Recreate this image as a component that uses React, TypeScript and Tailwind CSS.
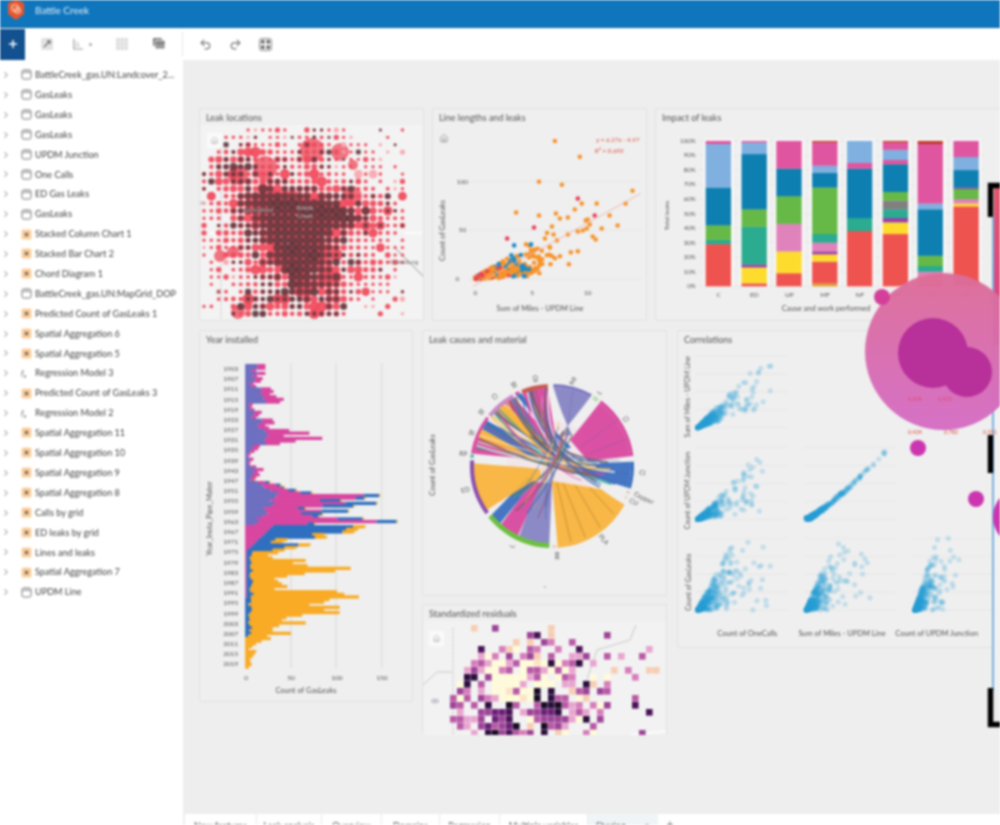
import React from "react";
import { ChevronRight, House, Plus, Redo2, Undo2 } from "lucide-react";

function makeRng(seed: number) {
  let s = seed >>> 0;
  return () => {
    s = (s + 0x6d2b79f5) >>> 0;
    let t = s;
    t = Math.imul(t ^ (t >>> 15), t | 1);
    t ^= t + Math.imul(t ^ (t >>> 7), t | 61);
    return ((t ^ (t >>> 14)) >>> 0) / 4294967296;
  };
}

type RowKind = "t" | "o" | "f";
const rows: [RowKind, string][] = [
  ["t", "BattleCreek_gas.UN:Landcover_2..."], ["t", "GasLeaks"], ["t", "GasLeaks"], ["t", "GasLeaks"],
  ["t", "UPDM Junction"], ["t", "One Calls"], ["t", "ED Gas Leaks"], ["t", "GasLeaks"],
  ["o", "Stacked Column Chart 1"], ["o", "Stacked Bar Chart 2"], ["o", "Chord Diagram 1"],
  ["t", "BattleCreek_gas.UN:MapGrid_DOP"], ["o", "Predicted Count of GasLeaks 1"],
  ["o", "Spatial Aggregation 6"], ["o", "Spatial Aggregation 5"], ["f", "Regression Model 3"],
  ["o", "Predicted Count of GasLeaks 3"], ["f", "Regression Model 2"], ["o", "Spatial Aggregation 11"],
  ["o", "Spatial Aggregation 10"], ["o", "Spatial Aggregation 9"], ["o", "Spatial Aggregation 8"],
  ["o", "Calls by grid"], ["o", "ED leaks by grid"], ["o", "Lines and leaks"], ["o", "Spatial Aggregation 7"],
  ["t", "UPDM Line"],
];

function RowIcon({ kind }: { kind: RowKind }) {
  if (kind === "f")
    return <span className="w-[11px] text-[8px] italic leading-none text-[#666]">f<sub className="text-[6px]">x</sub></span>;
  if (kind === "o")
    return (
      <svg width="11" height="11" viewBox="0 0 11 11" className="shrink-0">
        <rect x="0.5" y="0.5" width="10" height="10" rx="1.5" fill="#fbd0a0" />
        <rect x="3" y="3" width="5" height="5" fill="#f6b26a" />
        <circle cx="5.5" cy="5.5" r="1.5" fill="#3f6fa8" />
      </svg>
    );
  return (
    <svg width="11" height="11" viewBox="0 0 11 11" fill="none" stroke="#777" strokeWidth="1" className="shrink-0">
      <rect x="1" y="1" width="9" height="9" rx="1.5" />
      <path d="M1 3.5h9M4 1v2.5M7 1v2.5" strokeWidth="0.7" />
    </svg>
  );
}

function Panel({ title, className, children }: { title: string; className: string; children: React.ReactNode }) {
  return (
    <section className={`flex flex-col shrink-0 overflow-hidden rounded-[2px] border border-[#e0e0e0] bg-[#efefef] ${className}`}>
      <h2 className="h-[16px] shrink-0 pl-[6px] pt-[3px] text-[9px] font-normal leading-[12px] text-[#555]">{title}</h2>
      {children}
    </section>
  );
}

function Txt({ x, y, s, a = "middle", r, size = 7.5, fill = "#555", italic }: { x: number; y: number; s: string; a?: "start" | "middle" | "end"; r?: number; size?: number; fill?: string; italic?: boolean }) {
  return (
    <text x={x} y={y} textAnchor={a} fontSize={size} fill={fill} fontStyle={italic ? "italic" : undefined} transform={r !== undefined ? `rotate(${r} ${x} ${y})` : undefined}>
      {s}
    </text>
  );
}

function HomeBtn({ x, y }: { x: number; y: number }) {
  return (
    <g>
      <rect x={x} y={y} width="15" height="15" fill="#fafafa" />
      <House x={x + 3.5} y={y + 3.5} width="8" height="8" stroke="#999" strokeWidth="1.5" />
    </g>
  );
}

/* ---------- Leak locations ---------- */
function LeakMap() {
  const rng = makeRng(11);
  const clusters = [
    [288, 225, 30, 28, 0.95], [302, 270, 20, 30, 0.85], [340, 212, 28, 16, 0.7], [232, 168, 24, 12, 0.45],
    [312, 155, 9, 10, 0.4], [250, 305, 16, 10, 0.4], [335, 300, 10, 16, 0.35], [365, 265, 16, 8, 0.3], [255, 200, 20, 12, 0.5],
  ];
  const big: React.ReactNode[] = [];
  const dark: React.ReactNode[] = [];
  let k = 0;
  for (let y = 130; y <= 320; y += 7.35) {
    for (let x = 204; x <= 408; x += 7.35) {
      let d = 0;
      for (const [cx, cy, sx, sy, w] of clusters) d += w * Math.exp(-((x - cx) ** 2) / (2 * sx * sx) - ((y - cy) ** 2) / (2 * sy * sy));
      const dd = Math.min(d, 1);
      const far = Math.hypot((x - 298) / 112, (y - 225) / 105);
      if (rng() > (far > 1.0 ? 0.3 : 0.76) + d) continue;
      const rr = 1.7 + (rng() < 0.14 ? 0.9 : 0) + (rng() < 0.05 ? 2.5 : 0) + dd * 4.5 * (0.4 + rng() * 0.8);
      big.push(<circle key={k++} cx={x} cy={y} r={rr} fill={d < 0.05 && rng() < 0.2 ? "#f8a8b0" : "#f04c5e"} opacity={0.95} />);
      if (rng() < 0.09 + d * 1.05) {
        const rd = 1.5 + dd * 2.6 + (rng() < 0.12 ? 1.2 : 0);
        dark.push(<circle key={k++} cx={x} cy={y} r={rd} fill="#4a363a" opacity={0.75} />);
      }
    }
  }
  const blobs: [number, number, number][] = [[312, 150, 12], [340, 152, 9], [265, 168, 12], [238, 175, 10], [353, 165, 5], [233, 252, 6], [220, 256, 6], [238, 312, 7], [352, 196, 10]];
  return (
    <svg viewBox="200 125 224 195" className="block h-[195px] w-[224px]">
      <rect x="200" y="125" width="224" height="195" fill="#f3f3f3" />
      <path d="M221 140V320" stroke="#bbb" strokeDasharray="2 2" />
      <path d="M395 248L424 277" stroke="#c2c2c2" strokeWidth="1.5" />
      <path d="M405 233H424M240 250L210 232" stroke="#fff" strokeWidth="1.5" />
      <ellipse cx="203" cy="203" rx="3" ry="2" fill="#c8c8d8" />
      {blobs.map(([x, y, r], i) => <circle key={i} cx={x} cy={y} r={r} fill="#ee6673" opacity="0.9" />)}
      {big}
      {dark}
      <Txt x={258} y={212} s="Springfield" size={6.5} fill="#aaa" />
      <Txt x={305} y={210} s="Battle" size={6.5} fill="#b5b5b5" />
      <Txt x={305} y={218} s="Creek" size={6.5} fill="#b5b5b5" />
      <Txt x={404} y={264} s="Galesburg" size={6.5} fill="#777" />
      <HomeBtn x={207} y={133} />
    </svg>
  );
}

/* ---------- Line lengths ---------- */
function Scatter() {
  const rng = makeRng(23);
  const pts: [number, number, string][] = [];
  for (let i = 0; i < 680; i++) {
    const mx = -Math.log(1 - rng()) * 1.7;
    if (mx > 7) continue;
    const cy = mx * (1 + rng() * 6.5) * (0.45 + rng() * 0.6) + rng() * 2;
    const u = rng();
    const col = mx < 3 && u < 0.28 ? "#e8405a" : mx < 4.5 && u < 0.36 ? "#1d8bc8" : "#f7932a";
    pts.push([475 + mx * 11.3, 279 - cy, col]);
  }
  const extra: [number, number, string][] = [
    [555, 140, "#f7932a"], [580, 156, "#f7932a"], [539, 181, "#f7932a"], [562, 184, "#f7932a"], [578, 198, "#e8405a"],
    [633, 190, "#f7932a"], [626, 203, "#f7932a"], [597, 203, "#f7932a"], [516, 212, "#f7932a"], [539, 215, "#f7932a"],
    [556, 213, "#f7932a"], [575, 209, "#f7932a"], [582, 203, "#f7932a"], [595, 215, "#e8405a"], [610, 215, "#f7932a"],
    [618, 225, "#f7932a"], [602, 228, "#f7932a"], [587, 228, "#f7932a"], [568, 217, "#f7932a"], [560, 218, "#f7932a"],
    [588, 219, "#f7932a"], [590, 224, "#f7932a"], [586, 220, "#f7932a"], [583, 230, "#f7932a"], [578, 231, "#f7932a"],
    [568, 234, "#f7932a"], [593, 236, "#f7932a"], [552, 226, "#f7932a"], [534, 227, "#e8405a"], [507, 238, "#e8405a"],
    [514, 245, "#1d8bc8"], [596, 239, "#f7932a"], [571, 252, "#f7932a"], [578, 251, "#f7932a"], [569, 264, "#f7932a"],
    [545, 238, "#f7932a"], [557, 240, "#f7932a"], [550, 247, "#f7932a"], [535, 250, "#f7932a"], [526, 244, "#f7932a"],
    [547, 255, "#f7932a"], [555, 258, "#f7932a"], [560, 256, "#f7932a"], [540, 262, "#f7932a"], [533, 270, "#f7932a"],
    [522, 270, "#1d8bc8"], [529, 269, "#1d8bc8"], [531, 244, "#1d8bc8"],
  ];
  return (
    <svg viewBox="433 124 215 196" className="block h-[196px] w-[215px]">
      {[181, 230, 279].map((y) => <path key={y} d={`M468 ${y}H642`} stroke="#e6e6e6" />)}
      {[...pts, ...extra].map((p, i) => <circle key={i} cx={p[0]} cy={p[1]} r="2.3" fill={p[2]} />)}
      <path d="M473 286L641 193" stroke="#f0b8ae" strokeWidth="1" />
      <Txt x={640} y={141} s="y = 6.27x - 4.97" a="end" size={6.5} fill="#e0503f" italic />
      <Txt x={624} y={152} s="R² = 0.690" a="end" size={6.5} fill="#e0503f" italic />
      <House x={439} y={133} width="9" height="9" stroke="#777" strokeWidth="1.6" />
      <Txt x={462} y={183} s="100" size={6.5} />
      <Txt x={462} y={232} s="50" size={6.5} />
      <Txt x={457} y={281} s="0" size={6.5} />
      <Txt x={475} y={295} s="0" size={6.5} />
      <Txt x={532} y={295} s="5" size={6.5} />
      <Txt x={588} y={295} s="10" size={6.5} />
      <Txt x={445} y={230} s="Count of GasLeaks" r={-90} />
      <Txt x={540} y={311} s="Sum of Miles - UPDM Line" />
    </svg>
  );
}

/* ---------- Impact of leaks ---------- */
const C = { r: "#ef5350", y: "#fddc2e", p: "#9c3fa8", t: "#2bab90", g: "#66b947", k: "#808080", b: "#0d7fb0", m: "#e0559f", l: "#7fb0e0", n: "#e082bb", d: "#c0392b", o: "#e2a030" };
const stacks: [string, [keyof typeof C, number][]][] = [
  ["C", [["r", 29], ["t", 3], ["g", 10], ["b", 26], ["l", 30], ["m", 2]]],
  ["ED", [["r", 2], ["y", 11], ["p", 2], ["t", 26], ["g", 12], ["b", 38], ["l", 8], ["m", 1]]],
  ["UP", [["r", 9], ["y", 15], ["n", 19], ["g", 19], ["b", 19], ["m", 19]]],
  ["MF", [["o", 2], ["r", 15], ["y", 5], ["p", 2], ["n", 6], ["t", 6], ["g", 32], ["b", 10], ["l", 5], ["m", 16], ["d", 1]]],
  ["NF", [["r", 38], ["t", 9], ["b", 34], ["m", 4], ["l", 15]]],
  ["OP", [["r", 36], ["y", 8], ["p", 3], ["t", 6], ["k", 6], ["g", 6], ["b", 19], ["m", 3], ["l", 7], ["m", 5], ["d", 1]]],
  ["OP", [["r", 2], ["o", 4], ["n", 4], ["t", 4], ["g", 7], ["b", 32], ["l", 4], ["m", 41], ["d", 2]]],
  ["OT", [["r", 55], ["y", 2], ["n", 3], ["g", 7], ["p", 1], ["b", 12], ["l", 9], ["m", 11]]],
];
function Stacked() {
  const X = [705, 741, 776, 812, 847, 883, 918, 954];
  const Y = (v: number) => 286 - v * 1.46;
  return (
    <svg viewBox="656 124 358 196" className="block h-[196px] w-[358px]">
      {Array.from({ length: 11 }, (_, i) => (
        <g key={i}>
          <path d={`M698 ${Y(i * 10)}H985`} stroke="#e4e4e4" strokeWidth="0.7" />
          <Txt x={695} y={Y(i * 10) + 2} s={`${i * 10}%`} a="end" size={6.2} />
        </g>
      ))}
      {stacks.map(([label, segs], i) => {
        let acc = 0;
        return (
          <g key={i}>
            <rect x={X[i] - 2} y={138} width={30} height={148} fill="#f8f8f8" />
            {segs.map(([c, v], j) => {
              acc += v;
              return <rect key={j} x={X[i]} y={Y(acc)} width={25.5} height={v * 1.46 + 0.2} fill={C[c]} />;
            })}
            <Txt x={X[i] + 13} y={297} s={label} size={6.5} />
          </g>
        );
      })}
      <Txt x={668} y={215} s="Total leaks" r={-90} size={6.5} />
      <Txt x={826} y={311} s="Cause and work performed" />
    </svg>
  );
}

/* ---------- Year installed ---------- */
const totals = [22,22,12,22,13,19,17,9,12,28,31,27,34,42,38,8,7,10,18,15,12,30,32,22,26,48,70,42,84,55,38,16,14,10,6,4,9,6,5,12,20,14,16,12,10,26,38,42,55,72,146,130,104,143,118,65,112,84,80,128,165,75,130,122,118,85,88,45,40,70,55,42,36,25,30,66,52,68,115,98,65,46,32,36,40,46,32,100,108,124,92,86,70,103,86,103,62,45,40,66,37,30,30,50,24,28,18,12,8,4,12,10,8,5,6,7,4];
function YearBars() {
  const rng = makeRng(5);
  const h = 305 / totals.length;
  const bars = totals.map((t, i) => {
    const y = 363 + i * h;
    let segs: [string, number][];
    if (i < 45) {
      const pu = Math.min(t * 0.6, 20 + rng() * 8);
      segs = [["#6d6fc0", pu], ["#d946a0", t - pu]];
    } else if (i < 62) {
      const pu = Math.max(4, 45 - (i - 45) * 2.5 + rng() * 10);
      const cap = Math.min(pu, t * 0.5);
      const pk = (t - cap) * (0.6 + rng() * 0.3);
      segs = [["#6d6fc0", cap], ["#d946a0", pk], ["#2f6fc0", Math.max(0, t - cap - pk)]];
    } else if (i < 72) {
      const pk = Math.max(3, 30 - (i - 62) * 3);
      segs = [["#d946a0", pk], ["#2f6fc0", t - pk - 12], ["#f9ab25", 12]];
    } else if (i < 105) {
      const bl = 3 + rng() * 5;
      segs = [["#d946a0", i < 90 ? 1.5 : 0], ["#2f6fc0", bl], ["#f9ab25", t - bl - (i < 90 ? 1.5 : 0)]];
    } else {
      segs = [["#f9ab25", t]];
    }
    let acc = 0;
    return (
      <g key={i}>
        {segs.map(([c, v], j) => {
          const x = 245 + acc * 0.92;
          acc += Math.max(0, v);
          return <rect key={j} x={x} y={y} width={Math.max(0, v) * 0.92} height={h + 0.7} fill={c} />;
        })}
        {i >= 44 && i < 72 && <rect x={245 + t * 0.92} y={y} width="1.4" height={h} fill="#e8b830" />}
      </g>
    );
  });
  return (
    <svg viewBox="200 346 212 355" className="block h-[355px] w-[212px]">
      {[291, 336, 382].map((x) => <path key={x} d={`M${x} 362V668`} stroke="#d8d8d8" />)}
      {bars}
      {Array.from({ length: 30 }, (_, i) => (
        <Txt key={i} x={238} y={370 + i * 10.22} s={`${1903 + i * 4}`} a="end" size={6.5} />
      ))}
      <Txt x={246} y={680} s="0" size={6.5} />
      <Txt x={291} y={680} s="50" size={6.5} />
      <Txt x={337} y={680} s="100" size={6.5} />
      <Txt x={382} y={680} s="150" size={6.5} />
      <Txt x={212} y={518} s="Year_Insta_Pipe_Mater" r={-90} />
      <Txt x={306} y={693} s="Count of GasLeaks" />
    </svg>
  );
}

/* ---------- Chord ---------- */
const CX = 552, CY = 465, R = 82;
const pol = (a: number, r = R) => {
  const t = ((a - 90) * Math.PI) / 180;
  return [CX + r * Math.cos(t), CY + r * Math.sin(t)];
};
function wedge(a1: number, a2: number, t1: [number, number], t2: [number, number], r = R - 3) {
  const p1 = pol(a1, r), p2 = pol(a2, r);
  const f = 0.08;
  const cp = (p: number[], q: number[]) => `${(p[0] + q[0]) / 2 + (CX - (p[0] + q[0]) / 2) * f} ${(p[1] + q[1]) / 2 + (CY - (p[1] + q[1]) / 2) * f}`;
  return `M${p1[0]} ${p1[1]}A${r} ${r} 0 0 1 ${p2[0]} ${p2[1]}Q${cp(p2, t2)} ${t2[0]} ${t2[1]}L${t1[0]} ${t1[1]}Q${cp(p1, t1)} ${p1[0]} ${p1[1]}Z`;
}
function rim(a1: number, a2: number, c: string, w = 3) {
  const p1 = pol(a1, R - w / 2), p2 = pol(a2, R - w / 2);
  return <path key={`${a1}`} d={`M${p1[0]} ${p1[1]}A${R - w / 2} ${R - w / 2} 0 0 1 ${p2[0]} ${p2[1]}`} fill="none" stroke={c} strokeWidth={w} />;
}
function Chord() {
  const rng = makeRng(77);
  const colors = ["#3a6ec0", "#2f5fb0", "#6d6a48", "#d9479f", "#f9b43c", "#2bab90", "#f3eef0", "#8684c4", "#7a5a50", "#3a6ec0"];
  const thin: React.ReactNode[] = [];
  for (let i = 0; i < 46; i++) {
    const a = 278 + rng() * 82, b = 85 + rng() * 32;
    const p = pol(a, R - 4), q = pol(b, 20 + rng() * 52);
    thin.push(
      <path key={i} d={`M${p[0]} ${p[1]}Q${CX - 8 + (rng() - 0.5) * 30} ${CY - 4 + (rng() - 0.5) * 24} ${q[0]} ${q[1]}`} fill="none" stroke={colors[Math.floor(rng() * colors.length)]} strokeWidth={0.5 + rng() * 1.6} opacity={0.82} />
    );
  }
  for (let i = 0; i < 14; i++) {
    const a = 184 + rng() * 50, b = 5 + rng() * 30;
    const p = pol(a, 40 + rng() * 20), q = pol(b, 25 + rng() * 20);
    thin.push(
      <path key={`v${i}`} d={`M${p[0]} ${p[1]}Q${CX + (rng() - 0.5) * 20} ${CY + (rng() - 0.5) * 20} ${q[0]} ${q[1]}`} fill="none" stroke={colors[Math.floor(rng() * colors.length)]} strokeWidth={0.5 + rng() * 1.2} opacity={0.75} />
    );
  }
  const w: [number, number, [number, number], [number, number], string][] = [
    [1, 29, [572, 434], [558, 436], "#8684c4"],
    [37, 83, [570, 439], [588, 460], "#d9479f"],
    [87, 106, [588, 462], [580, 472], "#3a6ec0"],
    [118, 176, [601, 488], [552, 480], "#f9b43c"],
    [182, 205, [552, 482], [538, 482], "#8684c4"],
    [206, 221, [541, 482], [532, 480], "#d9479f"],
    [222, 231, [535, 478], [527, 476], "#3a6ec0"],
    [236, 272, [540, 476], [540, 468], "#f9b43c"],
    [279, 291, [535, 458], [540, 454], "#d9479f"],
    [291, 298, [540, 462], [545, 458], "#f9b43c"],
    [298, 305, [550, 466], [553, 460], "#3a6ec0"],
    [312, 322, [552, 450], [558, 447], "#f9b43c"],
    [323, 331, [550, 443], [556, 440], "#d9479f"],
    [333, 337, [568, 448], [571, 446], "#3a6ec0"],
    [338, 357, [545, 440], [556, 438], "#d9479f"],
  ];
  const labels: [number, number, string, number][] = [
    [575, 381, "MI", 30], [601, 393, "L", 42], [627, 420, "Ci", 60], [642, 474, "Cl", 98], [633, 503, "CU", 112],
    [602, 540, "PLA", 140], [555, 555, "BE", 180], [514, 546, "L", 208], [466, 491, "ED", 255], [463, 455, "RP", 276],
    [471, 434, "Bi", 288], [480, 413, "Bi", 306], [493, 397, "Cl", 318], [512, 385, "BI", 332], [533, 378, "OI", 350],
  ];
  return (
    <svg viewBox="423 346 243 248" className="block h-[248px] w-[243px]">
      <circle cx={CX} cy={CY} r={45} fill="#f1e6ea" />
      {w.map(([a, b, t1, t2, c], i) => <path key={i} d={wedge(a, b, t1, t2)} fill={c} opacity={0.94} />)}
      {[[128, 590, 487], [142, 575, 484], [155, 563, 482], [166, 557, 482]].map(([a, x, y], i) => {
        const p = pol(a, R - 3);
        return <path key={i} d={`M${p[0]} ${p[1]}L${x} ${y}`} stroke="#a87b2a" strokeWidth="0.6" />;
      })}
      <path d={`M${pol(15)[0]} ${pol(15)[1]}L567 432M${pol(55)[0]} ${pol(55)[1]}L580 446M${pol(70)[0]} ${pol(70)[1]}L585 454M${pol(96)[0]} ${pol(96)[1]}L588 466`} stroke="#5a5a9a" strokeWidth="0.5" opacity="0.6" />
      {thin}
      {rim(1, 29, "#7a76c0")}
      {rim(31, 35, "#b8e0b0", 4)}
      {rim(37, 83, "#d9479f")}
      {rim(87, 106, "#3a6ec0")}
      {rim(108, 110, "#d8c8b8")}
      {rim(112, 114, "#e8d8c8")}
      {rim(118, 176, "#f9b43c")}
      {rim(177, 180, "#e8d0c8")}
      {rim(182, 231, "#6cc040", 5)}
      {rim(234, 274, "#8a4fb0", 4)}
      {rim(276, 278, "#2bab90")}
      {rim(279, 307, "#d9479f")}
      {rim(309, 331, "#c98ac8", 4)}
      {rim(333, 336, "#d9479f")}
      {rim(338, 357, "#c85a50", 4)}
      {labels.map(([x, y, s, a], i) => <Txt key={i} x={x} y={y} s={s} r={a > 180 ? a - 270 : a - 90} size={6.5} />)}
      <Txt x={643} y={499} s="Copper" r={25} size={6.5} />
      <Txt x={435} y={464} s="Count of GasLeaks" r={-90} />
      <circle cx={545} cy={586} r={0.7} fill="#777" />
    </svg>
  );
}

/* ---------- Standardized residuals ---------- */
function Residuals() {
  const rng = makeRng(31);
  const cells: React.ReactNode[] = [];
  const rampM = ["#e9a5cf", "#d77dbb", "#b95aa6", "#9d4497"];
  const rampD = ["#1a0a24", "#2c0e3f", "#4a1358", "#6d1f78"];
  let k = 0;
  for (let r = 0; r < 16; r++) {
    for (let c = 0; c < 30; c++) {
      const x = 450 + c * 7, y = 625 + r * 7;
      const inA = x > 484 && x < 520 && y > 700;
      const inB = x > 528 && x < 560 && y > 685 && y < 725;
      const dc = Math.hypot((x - 530) / 70, (y - 695) / 50);
      const pale = dc < 0.95 && y > 655 && y < 700 && x > 485 && x < 560;
      let fill: string | null = null;
      const u = rng();
      if ((inA || inB) && u < 0.85) fill = u < 0.45 ? rampD[Math.floor(rng() * 4)] : rampM[2 + Math.floor(rng() * 2)];
      else if (pale) fill = u < 0.5 ? "#fffbd8" : u < 0.72 ? rampM[Math.floor(rng() * 3)] : u < 0.75 ? "#2c0e3f" : u < 0.84 ? "#fde3c4" : null;
      else if (dc < 1.15 && u < 0.55) fill = u < 0.1 ? "#fffbd8" : u < 0.16 ? "#f7cdb4" : u < 0.19 ? "#2c0e3f" : rampM[Math.floor(rng() * 4)];
      else if (dc < 2 && u < 0.17) fill = u < 0.03 ? "#4a1358" : u < 0.05 ? "#f7cdb4" : rampM[Math.floor(rng() * 4)];
      if (fill) cells.push(<rect key={k++} x={x} y={y} width="6.6" height="6.6" fill={fill} />);
    }
  }
  return (
    <svg viewBox="423 621 243 114" className="block h-[114px] w-[243px]">
      <rect x="423" y="621" width="243" height="114" fill="#f2f2f2" />
      <path d="M453 628V735" stroke="#bbb" strokeDasharray="2 2" />
      <path d="M423 685L437 672L452 672M580 700L597 650L630 640L636 625" stroke="#c8c8c8" fill="none" />
      <path d="M630 735L666 731M487 735L498 715" stroke="#fff" strokeWidth="1.5" />
      <ellipse cx="435" cy="701" rx="4" ry="2.5" fill="#c8c8d0" />
      {cells}
      <HomeBtn x={429} y={631} />
    </svg>
  );
}

/* ---------- Correlations ---------- */
type Cloud = { x: number; y: number; kind: "corr" | "line" | "fan"; seed: number; squeeze?: number };
const clouds: Cloud[] = [
  { x: 697, y: 355, kind: "corr", seed: 1 },
  { x: 697, y: 447, kind: "corr", seed: 2 },
  { x: 806, y: 447, kind: "line", seed: 3 },
  { x: 697, y: 538, kind: "fan", seed: 4 },
  { x: 806, y: 538, kind: "fan", seed: 5, squeeze: 0.8 },
  { x: 915, y: 538, kind: "fan", seed: 6, squeeze: 0.6 },
];
function Correlations() {
  const out: React.ReactNode[] = [];
  clouds.forEach((cl, ci) => {
    const rng = makeRng(cl.seed * 97);
    const W = 80, H = 72;
    for (let g = 0; g < 5; g++) out.push(<path key={`g${ci}-${g}`} d={`M${cl.x - 2} ${cl.y + (g * H) / 4}H${cl.x + 90}`} stroke="#e4e4e4" strokeWidth="0.7" />);
    const n = 420;
    for (let i = 0; i < n; i++) {
      const e = -Math.log(1 - rng()) * (rng() < 0.5 ? 0.08 : 0.3);
      if (e > 1) continue;
      let px = 0, py = 0;
      if (cl.kind === "line") {
        px = e * 1.05;
        py = Math.pow(px, 1.2) * 0.95 + (rng() - 0.5) * 0.05;
      } else if (cl.kind === "corr") {
        px = e;
        py = e * (cl.seed === 1 ? 0.35 + rng() * 0.85 : 0.15 + rng() * 1.05);
      } else {
        px = e * (cl.squeeze ?? 1);
        py = e * rng() * 2.2;
      }
      if (px > 1 || py > 1 || py < 0) continue;
      out.push(<circle key={`${ci}-${i}`} cx={cl.x + px * W} cy={cl.y + H - py * H} r="2.6" fill="#2a9fd6" opacity="0.22" />);
    }
  });
  return (
    <svg viewBox="678 346 330 301" className="block h-[301px] w-[330px]">
      {out}
      <Txt x={690} y={396} s="Sum of Miles - UPDM Line" r={-90} size={7} />
      <Txt x={690} y={490} s="Count of UPDM Junction" r={-90} size={7} />
      <Txt x={690} y={582} s="Count of GasLeaks" r={-90} size={7} />
      <Txt x={747} y={636} s="Count of OneCalls" />
      <Txt x={842} y={636} s="Sum of Miles - UPDM Line" />
      <Txt x={937} y={636} s="Count of UPDM Junction" />
    </svg>
  );
}

/* ---------- Floating selection overlay ---------- */
function Overlay() {
  return (
    <svg viewBox="0 0 1000 825" className="pointer-events-none absolute inset-0 h-[825px] w-[1000px] blur-[0.8px]">
      <defs>
        <linearGradient id="strip" x1="0" y1="0" x2="0" y2="1">
          <stop offset="0" stopColor="#e2566c" />
          <stop offset="1" stopColor="#d7418c" />
        </linearGradient>
        <linearGradient id="bubble" x1="0" y1="0" x2="0" y2="1">
          <stop offset="0" stopColor="#dc6d98" />
          <stop offset="1" stopColor="#d46cc4" />
        </linearGradient>
      </defs>
      <rect x="994" y="188" width="6" height="157" fill="url(#strip)" />
      <rect x="994" y="345" width="6" height="345" fill="#f1f1f1" />
      <path d="M993 217V690" stroke="#7ab0dc" strokeWidth="2" />
      <circle cx="943.5" cy="351.5" r="78.5" fill="url(#bubble)" opacity="0.97" />
      <circle cx="933" cy="353" r="35" fill="#b8309a" />
      <circle cx="967" cy="372" r="25" fill="#b8309a" />
      <circle cx="882" cy="297" r="8" fill="#d43f9a" />
      <circle cx="918" cy="448" r="8" fill="#cc35b0" />
      <circle cx="976" cy="499" r="8" fill="#cc35b0" />
      <circle cx="1023" cy="517" r="30" fill="#cc35b0" />
      <path d="M1000 185.5H990.5V217M990.5 435V473M990.5 688V724.5H1000" fill="none" stroke="#000" strokeWidth="5.5" />
      <Txt x={915} y={401} s="0.404" size={5.5} fill="#e0486a" />
      <Txt x={945} y={401} s="0.513" size={5.5} fill="#e0486a" />
      <Txt x={915} y={434} s="0.424" size={5.5} fill="#e0503f" />
      <Txt x={951} y={434} s="0.782" size={5.5} fill="#e0503f" />
      <Txt x={990} y={434} s="0.351" size={5.5} fill="#e0503f" />
    </svg>
  );
}

const tabs: [string, string][] = [
  ["New features", "w-[72px]"], ["Leak analysis", "w-[65px]"], ["Overview", "w-[60px]"], ["Domains", "w-[58px]"],
  ["Regression", "w-[60px]"], ["Multiple variables", "w-[88px]"],
];

export default function App() {
  return (
    <div className="relative h-[825px] w-[1000px] overflow-hidden bg-white font-['Lato','Noto_Sans',sans-serif]">
      <div className="flex h-[825px] w-[1000px] flex-col blur-[0.8px]">
        <header className="flex h-[28px] shrink-0 items-start gap-[10px] border-b border-[#0c66a6] bg-[#0f76bd] pl-[7px]">
          <svg width="18" height="20" viewBox="0 0 18 20">
            <path d="M9 0L17 3V14L9 20L1 14V3Z" fill="#e8562a" />
            <rect x="5" y="5" width="6" height="6" rx="1.5" fill="none" stroke="#f7d9cc" strokeWidth="1.2" />
            <rect x="8" y="8" width="5" height="5" rx="1.5" fill="none" stroke="#f7d9cc" strokeWidth="1.2" />
          </svg>
          <span className="pt-[3px] text-[10px] leading-[14px] text-[#e0eef8]">Battle Creek</span>
        </header>

        <div className="flex h-[32px] shrink-0 items-center bg-white">
          <div className="flex h-[31px] w-[25px] items-center justify-center bg-[#12508f]">
            <Plus size={12} strokeWidth={3} className="text-white" />
          </div>
          <div className="flex h-[24px] w-[158px] items-center border-r border-[#e8e8e8] pl-[16px]">
            <svg width="12" height="12" viewBox="0 0 12 12">
              <rect width="12" height="12" rx="1.5" fill="#e2e2e2" />
              <path d="M3 9L9 3M6 3H9V6" stroke="#777" strokeWidth="1.4" fill="none" />
            </svg>
            <svg width="12" height="12" viewBox="0 0 12 12" className="ml-[19px]">
              <path d="M2 1V11H11" stroke="#999" strokeWidth="1.2" fill="none" />
              <path d="M4 9V5L6 3L8 9Z" fill="#ddd" />
            </svg>
            <span className="ml-[5px] h-[3px] w-[3px] rounded-full bg-[#aaa]" />
            <svg width="12" height="12" viewBox="0 0 12 12" className="ml-[24px]">
              <rect width="12" height="12" rx="1" fill="#dedede" />
              <path d="M0 4H12M0 8H12M4 0V12M8 0V12" stroke="#f2f2f2" strokeWidth="0.8" />
            </svg>
            <svg width="13" height="12" viewBox="0 0 13 12" className="ml-[25px]">
              <rect x="0" y="0" width="9" height="8" rx="1" fill="#777" />
              <rect x="2" y="2" width="10" height="9" rx="1" fill="#999" stroke="#fff" strokeWidth="0.8" />
              <path d="M2 5H12" stroke="#666" strokeWidth="1" />
            </svg>
          </div>
          <div className="flex items-center gap-[17px] pl-[16px] text-[#777]">
            <Undo2 size={13} />
            <Redo2 size={13} />
            <svg width="13" height="13" viewBox="0 0 13 13">
              <rect x="0.5" y="0.5" width="12" height="12" rx="2" fill="none" stroke="#888" />
              <rect x="2" y="2" width="3.5" height="3.5" fill="#666" />
              <rect x="7.5" y="2" width="3.5" height="3.5" fill="#666" />
              <rect x="2" y="7.5" width="3.5" height="3.5" fill="#666" />
              <rect x="7.5" y="7.5" width="3.5" height="3.5" fill="#666" />
            </svg>
          </div>
        </div>

        <div className="flex min-h-0 flex-1">
          <aside className="w-[183px] shrink-0 bg-white pt-[5px]">
            {rows.map(([kind, label], i) => (
              <div key={i} className="flex h-[19.9px] items-center">
                <ChevronRight size={10} strokeWidth={2.5} className="ml-[1px] shrink-0 text-[#999]" />
                <span className="ml-[10px] flex w-[14px] shrink-0 items-center"><RowIcon kind={kind} /></span>
                <span className="truncate text-[9.1px] text-[#444]">{label}</span>
              </div>
            ))}
          </aside>

          <main className="flex min-w-0 flex-1 flex-col bg-[#eeeeee]">
            <div className="min-h-0 flex-1 overflow-hidden pl-[16px] pt-[48px]">
              <div className="flex gap-[8px]">
                <Panel title="Leak locations" className="h-[213px] w-[225px]"><LeakMap /></Panel>
                <Panel title="Line lengths and leaks" className="h-[213px] w-[215px]"><Scatter /></Panel>
                <Panel title="Impact of leaks" className="h-[213px] w-[360px]"><Stacked /></Panel>
              </div>
              <div className="mt-[9px] flex items-start gap-[9px]">
                <Panel title="Year installed" className="h-[372px] w-[214px]"><YearBars /></Panel>
                <div className="flex w-[245px] shrink-0 flex-col gap-[8px]">
                  <Panel title="Leak causes and material" className="h-[266px] w-[245px]"><Chord /></Panel>
                  <Panel title="Standardized residuals" className="h-[131px] w-[245px] border-b-0"><Residuals /></Panel>
                </div>
                <Panel title="Correlations" className="ml-[1px] h-[318px] w-[332px]"><Correlations /></Panel>
              </div>
            </div>
            <nav className="ml-[2px] flex h-[11px] shrink-0 overflow-hidden bg-white">
              {tabs.map(([t, w]) => (
                <span key={t} className={`h-[20px] border-r border-[#eaeaea] pt-[6px] text-center text-[9px] leading-[12px] text-[#555] ${w}`}>{t}</span>
              ))}
              <span className="flex h-[20px] w-[70px] justify-between bg-[#eff5f7] px-[8px] pt-[6px] text-[9px] leading-[12px] text-[#555]">Sharing<span className="text-[6px]">▼</span></span>
              <span className="w-[24px] pt-[4px] text-center text-[11px] leading-[12px] text-[#666]">+</span>
            </nav>
          </main>
        </div>
      </div>
      <Overlay />
    </div>
  );
}
